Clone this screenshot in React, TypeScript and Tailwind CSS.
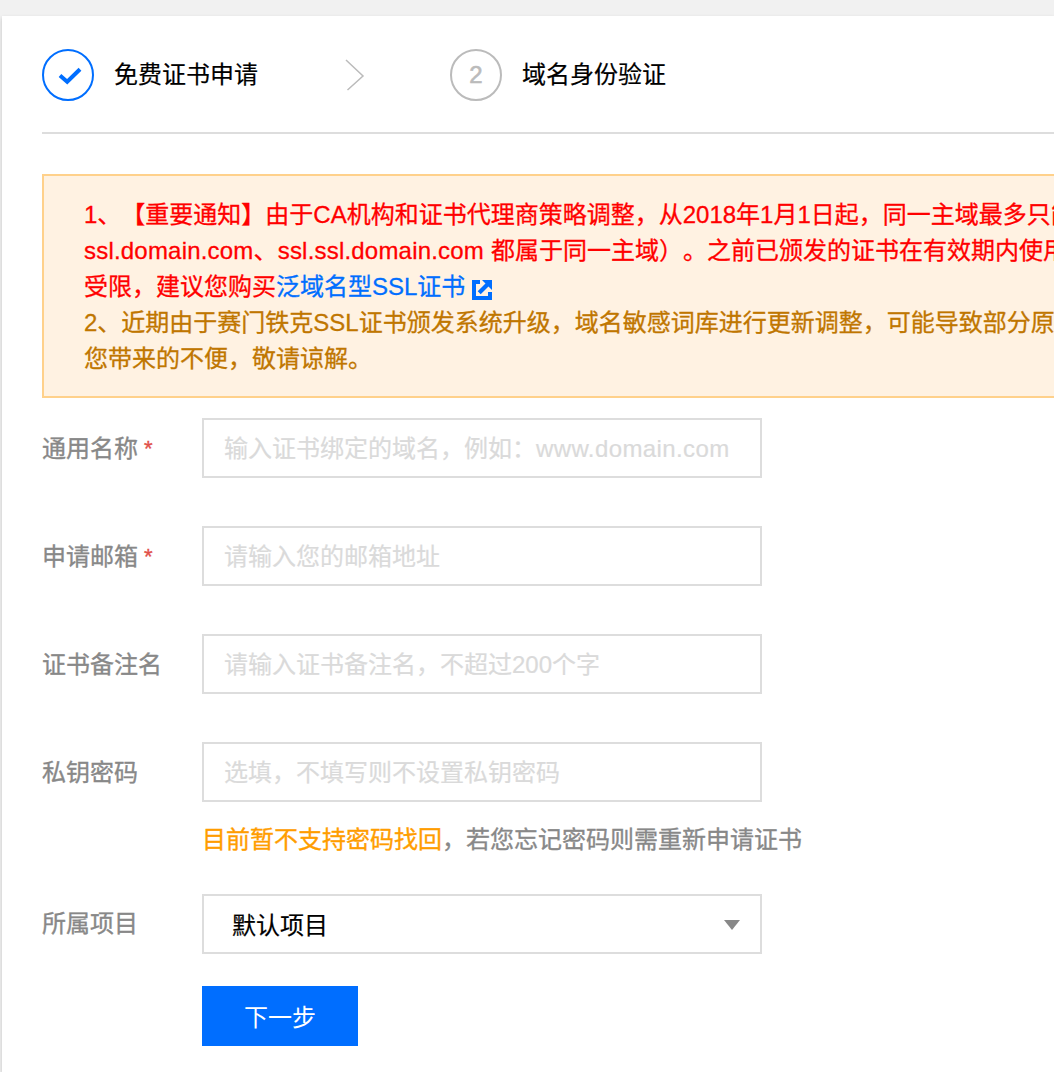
import React from "react";

type FieldProps = {
  label: string;
  required?: boolean;
  hint: string;
  example?: string;
};

function Label({ text, required }: { text: string; required?: boolean }) {
  return (
    <label className="flex h-[60px] w-40 shrink-0 items-center text-[#888888] [-webkit-text-stroke:0.35px]">
      {text}
      {required && <span className="ml-1.5 text-[22px] text-[#e1504a]">*</span>}
    </label>
  );
}

function Field({ label, required, hint, example }: FieldProps) {
  return (
    <div className="flex">
      <div className="pt-px">
        <Label text={label} required={required} />
      </div>
      <div className="flex h-[60px] w-[560px] items-center border-2 border-[#dddddd] bg-white px-5 pt-0.5 whitespace-nowrap text-[#dadada] [-webkit-text-stroke:0.2px]">
        {hint}
        {example && <span className="tracking-[0.4px]">{example}</span>}
      </div>
    </div>
  );
}

function Steps() {
  return (
    <div className="flex h-[118px] items-center border-b-2 border-[#dddddd] pt-0.5">
      <svg className="size-[52px]" viewBox="0 0 52 52" fill="none" stroke="#006eff">
        <circle cx="26" cy="26" r="25" strokeWidth="2" />
        <path d="M18 26.500l7.200 6.200L38 20.300" strokeWidth="4" />
      </svg>
      <span className="ml-5 w-[144px] [-webkit-text-stroke:0.2px]">免费证书申请</span>
      <svg className="ml-[87px] h-8 w-5" viewBox="0 0 20 32" fill="none" stroke="#bbbbbb" strokeWidth="1.5">
        <path d="M1 1l17 16L2.500 31" />
      </svg>
      <span className="ml-[85px] flex size-[52px] items-center justify-center rounded-full border-2 border-[#bbbbbb] text-[#bbbbbb] [-webkit-text-stroke:0.6px]">
        2
      </span>
      <span className="ml-5 [-webkit-text-stroke:0.2px]">域名身份验证</span>
    </div>
  );
}

function ExternalIcon() {
  return (
    <svg className="mt-[5px] ml-[7px] size-5" viewBox="0 0 20 20" fill="#006eff">
      <path d="M0 0h8v4H4v12h12v-4h4v8H0z" />
      <path d="M10 0h10v10l-3.500-3.500L8.700 14.300 5.700 11.300 13.500 3.500z" />
    </svg>
  );
}

function Notice() {
  return (
    <div className="mt-10 h-56 overflow-hidden border-2 border-r-0 border-[#ffd18b] bg-[#fff2e2] pt-[21px] pl-10 leading-9 whitespace-nowrap [-webkit-text-stroke:0.3px]">
      <div className="text-[#ff0000]">
        <p>1、【重要通知】由于CA机构和证书代理商策略调整，从2018年1月1日起，同一主域最多只能</p>
        <p>
          <span className="tracking-[0.2px]">ssl.domain.com、ssl.ssl.domain.com </span>
          都属于同一主域）。之前已颁发的证书在有效期内使用
        </p>
        <p className="flex h-9 items-center">
          受限，建议您购买
          <a className="flex items-center text-[#006eff]">
            泛域名型SSL证书
            <ExternalIcon />
          </a>
        </p>
      </div>
      <div className="text-[#c07600]">
        <p>2、近期由于赛门铁克SSL证书颁发系统升级，域名敏感词库进行更新调整，可能导致部分原</p>
        <p>您带来的不便，敬请谅解。</p>
      </div>
    </div>
  );
}

export default function App() {
  return (
    <div
      lang="zh-CN"
      className="h-[1072px] w-[1054px] overflow-hidden bg-[#f1f1f1] pt-4 pl-0.5 font-['Liberation_Sans','Noto_Sans_CJK_SC',sans-serif] text-[24px] leading-9 text-black [text-spacing-trim:space-all]"
    >
      <main className="h-full bg-white pl-10 shadow-[0_2px_4px_rgba(0,0,0,0.2)]">
        <Steps />
        <Notice />
        <form className="mt-5">
          <div className="flex flex-col gap-[47px]">
            <Field label="通用名称" required hint="输入证书绑定的域名，例如：" example="www.domain.com" />
            <Field label="申请邮箱" required hint="请输入您的邮箱地址" />
            <Field label="证书备注名" hint="请输入证书备注名，不超过200个字" />
            <Field label="私钥密码" hint="选填，不填写则不设置私钥密码" />
          </div>
          <p className="mt-[19px] ml-40 text-[#888888] [-webkit-text-stroke:0.35px]">
            <span className="text-[#ff9d00]">目前暂不支持密码找回</span>，若您忘记密码则需重新申请证书
          </p>
          <div className="mt-9 flex">
            <Label text="所属项目" />
            <button
              type="button"
              className="flex h-[60px] w-[560px] items-center justify-between border-2 border-[#dddddd] bg-white pr-5 pl-7"
            >
              <span className="pt-1 [-webkit-text-stroke:0.2px]">默认项目</span>
              <svg className="mt-px h-2.5 w-4" viewBox="0 0 16 10" fill="#888888">
                <path d="M0 0h16L8 10z" />
              </svg>
            </button>
          </div>
          <button type="button" className="mt-8 ml-40 h-[60px] w-[156px] bg-[#006eff] pt-[3px] text-white">
            下一步
          </button>
        </form>
      </main>
    </div>
  );
}
